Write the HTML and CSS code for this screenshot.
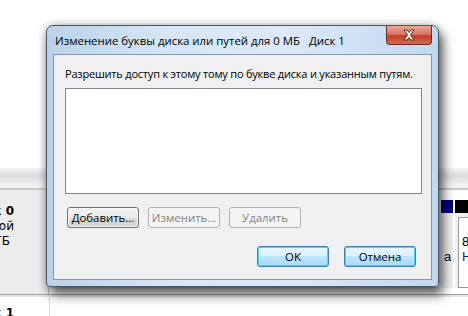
FILE: index.html
```html
<!DOCTYPE html>
<html lang="ru">
<head>
    <meta charset="UTF-8">
    <title>Изменение буквы диска</title>
    <link rel="stylesheet" href="styles.css">
</head>
<body>
    <!-- Фон: окно управления дисками -->
    <div class="screen">
        <div class="top-area"></div>
        <div class="col-header"></div>
        <div class="disk-row">
            <div class="disk-label">
                <div class="label-text">
                    <b>Диск 0</b>
                    <span>Основной</span>
                    <span class="lb-size">465 ГБ</span>
                </div>
            </div>
            <div class="parts">
                <div class="part part-main"></div>
                <div class="part part-a">
                    <div class="bar bar-navy"></div>
                    <div class="part-text">а</div>
                </div>
                <div class="part part-n">
                    <div class="bar bar-black"></div>
                    <div class="part-box">
                        <span>8 ГБ</span>
                        <span class="free">Не распределена</span>
                    </div>
                </div>
            </div>
        </div>
        <div class="disk-row2">
            <div class="disk-label2">
                <div class="label-text"><b>Диск 1</b></div>
            </div>
        </div>
    </div>

    <!-- Диалог -->
    <div class="dialog">
        <div class="titlebar">
            <span class="title">Изменение буквы диска или путей для 0 МБ&nbsp;&nbsp;&nbsp;Диск 1</span>
            <div class="close-btn">
                <svg width="18" height="12" viewBox="0 0 18 12">
                    <path d="M4 1 L7 1 L9 3.5 L11 1 L14 1 L10.5 6 L14 11 L11 11 L9 8.5 L7 11 L4 11 L7.5 6 Z" fill="#fff" stroke="#5a2a22" stroke-width="1" stroke-linejoin="round"/>
                </svg>
            </div>
        </div>
        <div class="client">
            <div class="caption">Разрешить доступ к этому тому по букве диска и указанным путям.</div>
            <div class="listbox"></div>
            <div class="btn-row">
                <button class="btn">Добавить...</button>
                <button class="btn" disabled>Изменить...</button>
                <button class="btn" disabled>Удалить</button>
            </div>
            <div class="btn-row bottom-row">
                <button class="btn btn-blue">OK</button>
                <button class="btn btn-blue">Отмена</button>
            </div>
        </div>
    </div>
</body>
</html>
```

FILE: styles.css
```css
/* Общие стили */
body {
    margin: 0;
    font-family: 'Open Sans', 'Noto Sans', sans-serif;
    font-size: 11.4px;
    background-color: #fff;
    overflow: hidden;
}

.screen {
    width: 468px;
    height: 316px;
    overflow: hidden;
    background-color: #fff;
}

.top-area {
    height: 168px;
}

.col-header {
    height: 20px;
    background: linear-gradient(#f4f4f4, #dcdcdc 40%, #ececec 70%, #f6f6f6);
    border-bottom: 2px solid #c9c9c9;
}

/* Строка диска */
.disk-row {
    display: flex;
    height: 104px;
    border-bottom: 1px solid #a0a0a0;
}

.disk-label {
    flex: none;
    width: 48px;
    background-color: #ececec;
    border-right: 1px solid #b8b8b8;
    overflow: hidden;
    font-family: 'DejaVu Sans', sans-serif;
}

.label-text {
    width: 14px;
    padding-top: 14px;
    display: flex;
    flex-direction: column;
    align-items: flex-end;
    line-height: 15px;
    font-size: 12px;
    white-space: nowrap;
}

.label-text b {
    font-weight: bold;
}

.lb-size {
    margin-right: 4px;
}

.parts {
    flex: 1;
    min-width: 0;
    display: flex;
    gap: 2px;
    padding: 10px 0 6px 3px;
    background-color: #fff;
}

.part {
    display: flex;
    flex-direction: column;
    background-color: #f0f0f0;
    overflow: hidden;
    min-width: 0;
}

.part-main {
    flex: none;
    width: 387px;
}

.part-a {
    flex: none;
    width: 12px;
}

.part-n {
    flex: 1;
}

.bar {
    height: 13px;
    flex: none;
}

.bar-navy {
    background-color: #000080;
}

.bar-black {
    background-color: #000;
}

.part-text {
    margin-top: 36px;
    padding-left: 3px;
    font-family: 'Liberation Sans', sans-serif;
    font-size: 13px;
    white-space: nowrap;
}

.part-box {
    flex: 1;
    margin: 4px 0 0 3px;
    border: 1px solid #9a9a9a;
    border-right: none;
    background-color: #fff;
    padding: 16px 0 0 3px;
    font-family: 'Liberation Sans', sans-serif;
    font-size: 13px;
    line-height: 15px;
    white-space: nowrap;
    display: flex;
    flex-direction: column;
}

.free {
    color: #1a1a6e;
}

.disk-row2 {
    display: flex;
    height: 30px;
    border-top: 2px solid #e6e6e6;
}

.disk-label2 {
    flex: none;
    width: 49px;
    border-right: 1px solid #d8d8d8;
    overflow: hidden;
    font-family: 'DejaVu Sans', sans-serif;
}

.disk-label2 .label-text {
    padding-top: 9px;
}

/* Окно диалога */
.dialog {
    position: absolute;
    left: 46px;
    top: 25px;
    width: 393px;
    height: 262px;
    box-sizing: border-box;
    border: 1px solid #4a5566;
    border-radius: 7px 7px 4px 4px;
    background: linear-gradient(90deg, #b9d1ea, #d6e6f6 30%, #dce9f7 60%, #c2d8ee);
    box-shadow: 4px 8px 12px rgba(0, 0, 0, 0.6), 0 0 8px rgba(0, 0, 0, 0.3);
    padding: 0 6px 6px 6px;
    display: flex;
    flex-direction: column;
}

.titlebar {
    height: 28px;
    display: flex;
    align-items: flex-start;
    flex: none;
}

.title {
    flex: none;
    padding: 7px 0 0 2px;
    color: #000;
    white-space: nowrap;
}

.close-btn {
    flex: none;
    margin-left: auto;
    width: 46px;
    height: 19px;
    box-sizing: border-box;
    border: 1px solid #6b2a22;
    border-top: none;
    border-radius: 0 0 4px 4px;
    background: linear-gradient(#e8a699, #d97867 45%, #c43c23 55%, #d26a56);
    display: flex;
    align-items: center;
    justify-content: center;
}

.client {
    flex: 1;
    background-color: #f0f0f0;
    border: 1px solid #8497ac;
    padding: 11px 15px 0 11px;
}

.caption {
    font-size: 11px;
    letter-spacing: -0.2px;
    line-height: 15px;
    color: #000;
    white-space: nowrap;
}

.listbox {
    margin-top: 7px;
    width: 355px;
    height: 104px;
    background-color: #fff;
    border: 1px solid #828790;
}

.btn-row {
    display: flex;
    gap: 9px;
    margin-top: 13px;
    padding-left: 2px;
}

.bottom-row {
    justify-content: flex-end;
    gap: 15px;
    margin-top: 18px;
}

.btn {
    width: 72px;
    height: 21px;
    padding: 0;
    font-family: inherit;
    font-size: 11.4px;
    color: #000;
    border: 1px solid #707070;
    border-radius: 3px;
    background: linear-gradient(#f2f2f2, #ebebeb 50%, #dddddd 50%, #cfcfcf);
    box-shadow: inset 0 0 0 1px rgba(255, 255, 255, 0.7);
}

.btn:disabled {
    color: #838383;
    border-color: #adb2b5;
    background: #f4f4f4;
    box-shadow: none;
}

.btn-blue {
    border-color: #3c7fb1;
    background: linear-gradient(#eaf6fd, #d9f0fc 50%, #bee6fd 50%, #a7d9f5);
    box-shadow: inset 0 0 0 1px #48d5fa;
}
```
